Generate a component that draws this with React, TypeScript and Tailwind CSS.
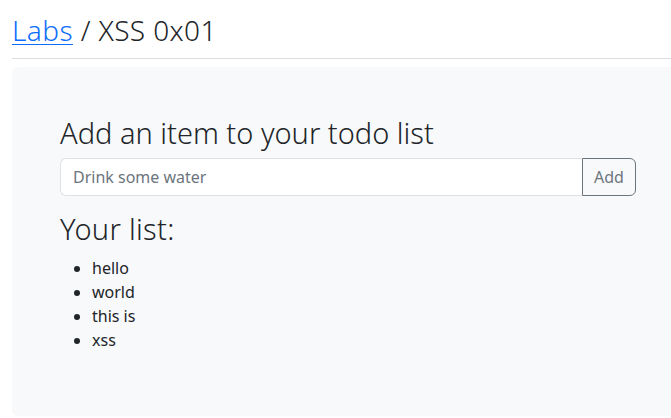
import { useState } from 'react'

const items = ['hello', 'world', 'this is', 'xss']

export default function App() {
  const [todo, setTodo] = useState('')

  return (
    <div className="min-h-[418px] overflow-hidden bg-white font-['Noto_Sans',sans-serif] text-[#212529]">
      <div className="px-3 pt-3">
        {/* Title */}
        <h1 className="text-[28px] leading-[36px] font-light tracking-[0.4px]">
          <a href="#" className="text-[#0d6efd] underline decoration-1 underline-offset-[3px]">
            Labs
          </a>{' '}
          / XSS 0x01
        </h1>
        <hr className="mt-[10px] mr-[-12px] border-t border-[#dcdde0]" />

        {/* Panel */}
        <div className="mt-2 mr-[-25px] rounded-md bg-[#f8f9fa] p-12">
          <h2 className="text-[29px] leading-[36px] font-light">Add an item to your todo list</h2>
          <form
            className="mt-[7px] flex"
            onSubmit={e => {
              e.preventDefault()
              setTodo('')
            }}
          >
            <input
              value={todo}
              onChange={e => setTodo(e.target.value)}
              placeholder="Drink some water"
              className="h-[38px] flex-1 rounded-l-md border border-r-0 border-[#dee2e6] bg-white px-3 text-base text-[#212529] outline-none placeholder:text-[#6c757d]"
            />
            <button
              type="submit"
              className="flex h-[38px] w-[54px] items-center justify-center rounded-r-md border border-[#6c757d] text-base text-[#6c757d]"
            >
              Add
            </button>
          </form>

          <h3 className="mt-[15px] text-[29px] leading-[36px] font-light tracking-[0.3px]">Your list:</h3>
          <ul className="mt-[9px] mb-4 list-disc pl-8 text-base leading-6">
            {items.map(item => (
              <li key={item}>{item}</li>
            ))}
          </ul>
        </div>
      </div>
    </div>
  )
}
